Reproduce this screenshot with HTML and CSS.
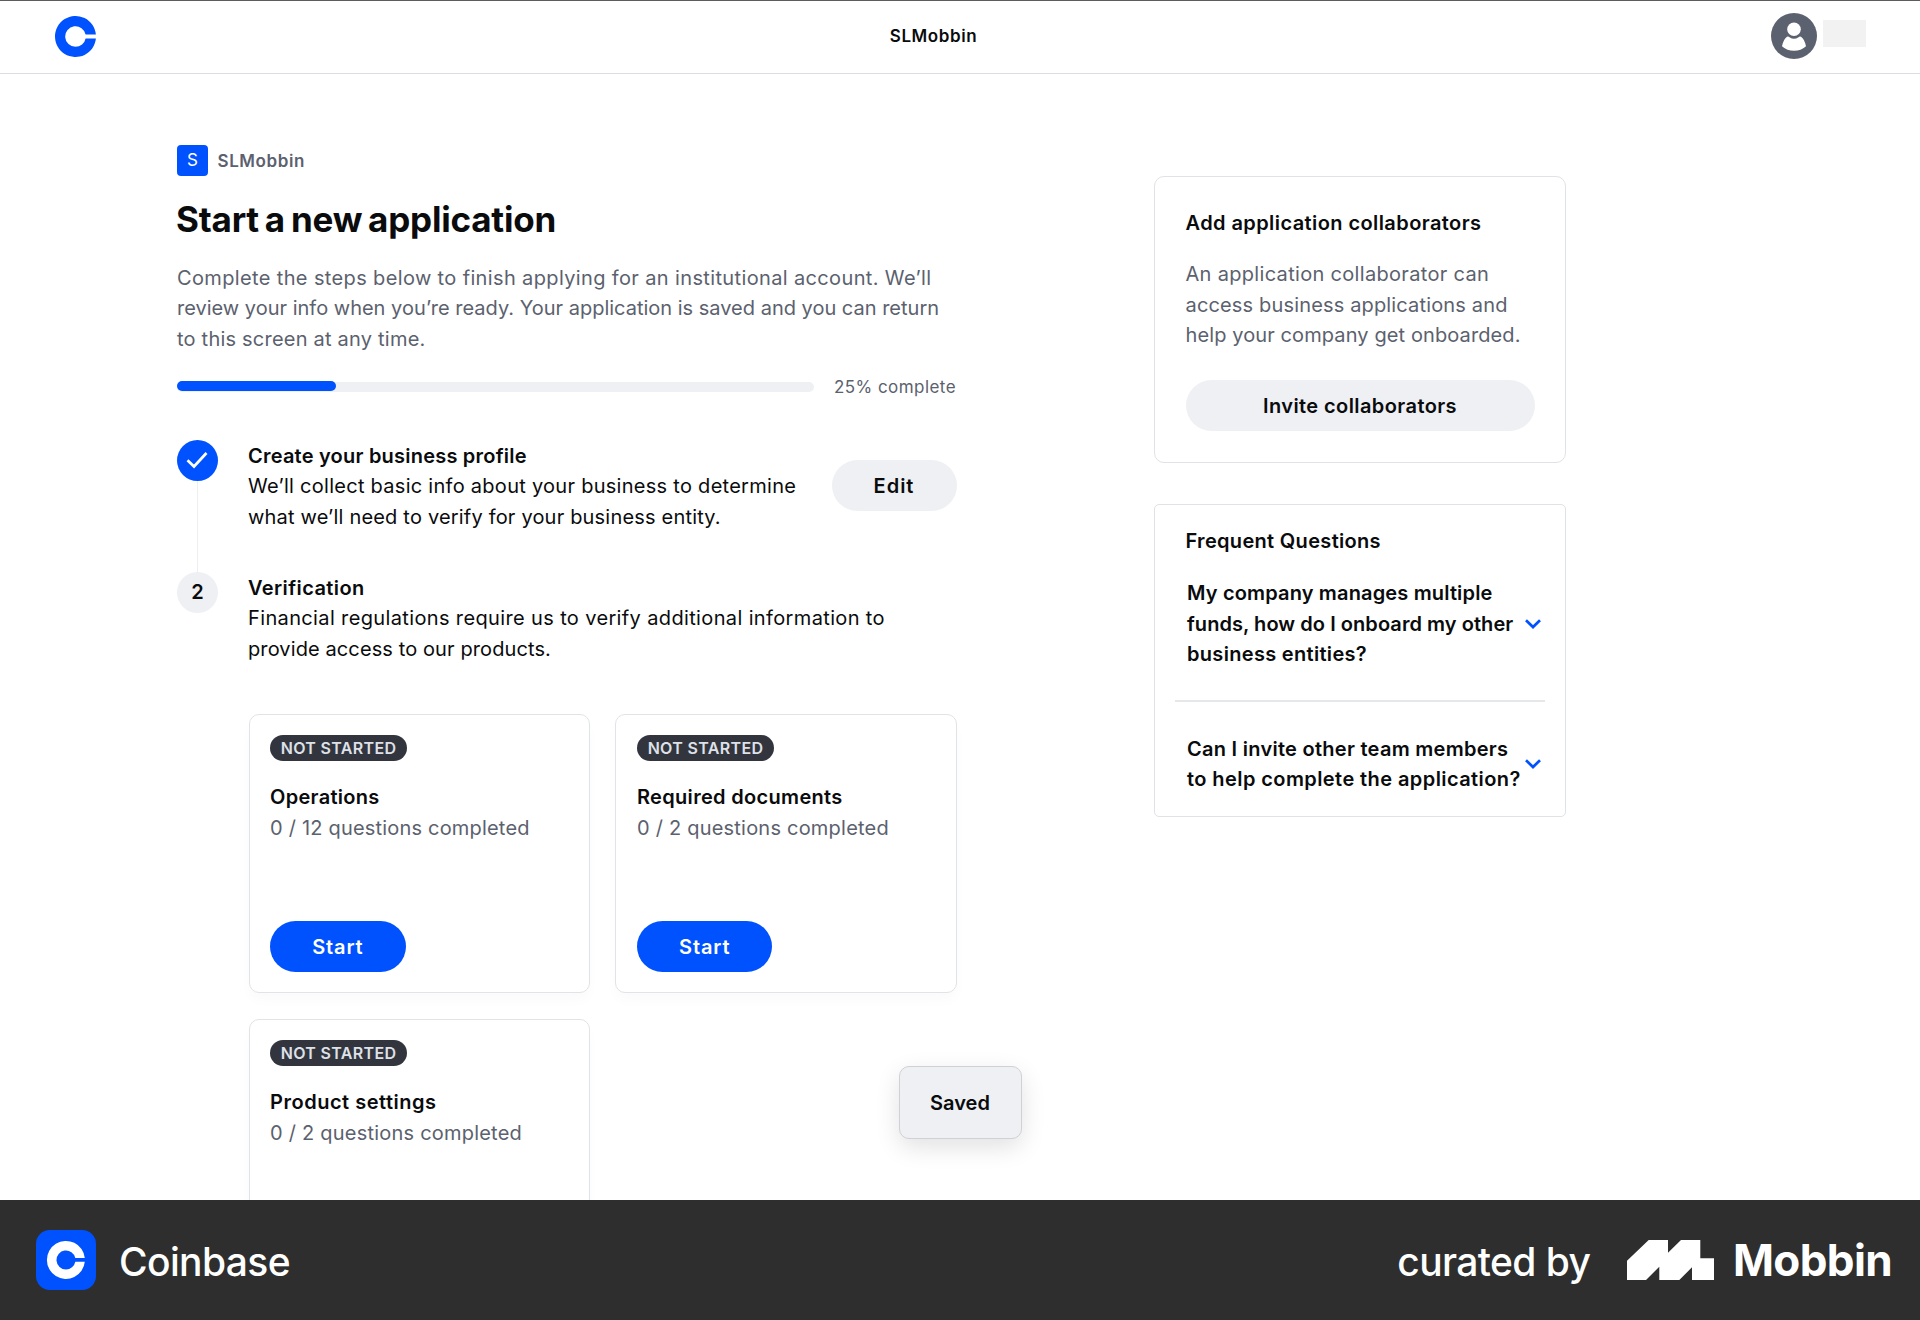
FILE: index.html
```html
<!DOCTYPE html>
<html lang="en">
<head>
<meta charset="utf-8">
<title>Start a new application</title>
<link rel="stylesheet" href="styles.css">
</head>
<body>
<div class="page">
  <header class="topbar">
    <svg class="topbar-logo" viewBox="0 0 41 41" aria-hidden="true"><path fill="#0052ff" d="M20.500 30.800A10.300 10.300 0 1 1 30.600 18.500H40.900A20.500 20.500 0 1 0 40.900 22.500H30.600A10.300 10.300 0 0 1 20.500 30.800Z"/></svg>
    <span class="topbar-name">SLMobbin</span>
    <div class="topbar-user">
      <svg class="avatar" viewBox="0 0 46 46" aria-hidden="true"><circle cx="23" cy="23" r="23" fill="#5b616e"/><circle cx="23" cy="16.300" r="6.800" fill="#fff"/><path fill="#fff" d="M16 23.700Q17.500 23.200 18.500 24.200Q23 27.400 27.500 24.200Q28.500 23.200 30 23.700Q33.500 26 35 33.200Q30 37.800 23 37.800T11 33.200Q12.500 26 16 23.700Z"/></svg>
      <span class="user-placeholder"></span>
    </div>
  </header>

  <main class="content">
    <section class="application">
      <div class="org">
        <span class="org-badge">S</span>
        <span class="org-name">SLMobbin</span>
      </div>
      <h1 class="title">Start a new application</h1>
      <p class="text muted intro"><span class="track-36">Complete the steps below to finish applying for an institutional account. We’ll</span><br><span>review your info when you’re ready. Your application is saved and you can return</span><br><span class="track-22">to this screen at any time.</span></p>
      <div class="progress">
        <div class="progress-track"><div class="progress-fill" style="width:25%"></div></div>
        <span class="progress-label">25% complete</span>
      </div>

      <ol class="steps">
        <li class="step">
          <div class="step-rail">
            <span class="step-mark done"><svg viewBox="0 0 41 41" aria-hidden="true"><path d="M10.500 20.300L17 26.500L29.500 13" fill="none" stroke="#fff" stroke-width="2.700"/></svg></span>
            <span class="step-line"></span>
          </div>
          <div class="step-body">
            <h2 class="heading track-22">Create your business profile</h2>
            <p class="text"><span class="track-28">We’ll collect basic info about your business to determine</span><br><span class="track-19">what we’ll need to verify for your business entity.</span></p>
          </div>
          <button class="btn btn-edit">Edit</button>
        </li>
        <li class="step">
          <div class="step-rail"><span class="step-mark">2</span></div>
          <div class="step-body">
            <h2 class="heading track-42">Verification</h2>
            <p class="text"><span class="track-36">Financial regulations require us to verify additional information to</span><br><span class="track-11">provide access to our products.</span></p>
          </div>
        </li>
      </ol>

      <div class="tasks">
        <article class="task">
          <span class="tag">NOT STARTED</span>
          <h3 class="heading track-28">Operations</h3>
          <p class="text muted track-19">0 / 12 questions completed</p>
          <button class="btn btn-primary">Start</button>
        </article>
        <article class="task">
          <span class="tag">NOT STARTED</span>
          <h3 class="heading track-31">Required documents</h3>
          <p class="text muted track-22">0 / 2 questions completed</p>
          <button class="btn btn-primary">Start</button>
        </article>
        <article class="task">
          <span class="tag">NOT STARTED</span>
          <h3 class="heading track-51">Product settings</h3>
          <p class="text muted track-22">0 / 2 questions completed</p>
        </article>
      </div>
    </section>

    <aside class="sidebar">
      <section class="panel collaborators">
        <h2 class="heading track-42">Add application collaborators</h2>
        <p class="text muted"><span class="track-31">An application collaborator can</span><br><span class="track-16">access business applications and</span><br><span class="track-11">help your company get onboarded.</span></p>
        <button class="btn btn-wide">Invite collaborators</button>
      </section>
      <section class="panel faq">
        <h2 class="heading track-31">Frequent Questions</h2>
        <div class="question">
          <span class="heading"><span class="track-16">My company manages multiple</span><br><span class="track-05">funds, how do I onboard my other</span><br><span class="track-31">business entities?</span></span>
          <svg class="chevron" viewBox="0 0 16 10" aria-hidden="true"><path d="M1 1.200L8 8L15 1.200" fill="none" stroke="#0052ff" stroke-width="2.700"/></svg>
        </div>
        <div class="question">
          <span class="heading"><span class="track-28">Can I invite other team members</span><br><span class="track-42">to help complete the application?</span></span>
          <svg class="chevron" viewBox="0 0 16 10" aria-hidden="true"><path d="M1 1.200L8 8L15 1.200" fill="none" stroke="#0052ff" stroke-width="2.700"/></svg>
        </div>
      </section>
    </aside>
  </main>
  <div class="toast">Saved</div>
</div>

<footer class="credit">
  <svg class="credit-app" viewBox="0 0 60 60" aria-hidden="true"><rect width="60" height="60" rx="14" fill="#0052ff"/><path fill="#fff" d="M30 39.500A9.500 9.500 0 1 1 39.300 28H48.800A19 19 0 1 0 48.800 31.800H39.300A9.500 9.500 0 0 1 30 39.500Z"/></svg>
  <span class="credit-name">Coinbase</span>
  <span class="credit-by">curated by</span>
  <svg class="credit-mark" viewBox="0 0 87 40" aria-hidden="true"><path fill="#fff" d="M0 20.700L21.700 0H41V12.700L54 0H73.300V18.300H87V40H65V27.300L52.300 40H32.300V26.700L19 40H0Z"/></svg>
  <span class="credit-brand">Mobbin</span>
</footer>
</body>
</html>
```
FILE: styles.css
```css
* { box-sizing: border-box; margin: 0; padding: 0; }

body {
  width: 1920px;
  height: 1320px;
  overflow: hidden;
  background: #fff;
  color: #0a0b0d;
  font-family: Inter, "Liberation Sans", sans-serif;
  font-size: 20px;
  line-height: 30.5px;
}

.page {
  position: relative;
  height: 1200px;
  overflow: hidden;
  border-top: 1px solid #5c5c5f;
}

.topbar {
  display: flex;
  align-items: center;
  justify-content: space-between;
  height: 73px;
  padding: 0 54px 2px 55px;
  border-bottom: 1px solid #dcdde0;
}
.topbar-logo { width: 41px; height: 41px; }
.topbar-name { font-size: 17px; line-height: 24px; font-weight: 600; letter-spacing: .59px; }
.topbar-user { display: flex; gap: 6px; }
.avatar { width: 46px; height: 46px; }
.user-placeholder { width: 43px; height: 27px; margin-top: 7px; background: #f2f2f2; }

.content { display: flex; justify-content: space-between; width: 1566px; padding-left: 177px; }
.application { width: 779.5px; padding-top: 71px; }

.org { display: flex; align-items: center; gap: 9.500px; height: 31px; font-size: 17px; line-height: 24px; }
.org-badge { width: 31px; height: 31px; border-radius: 4px; background: #0052ff; color: #fff; text-align: center; line-height: 31px; }
.org-name { color: #5b616e; font-weight: 600; letter-spacing: .59px; }

.title { margin: 21px 0 0 -1px; font-size: 35px; line-height: 44px; font-weight: 700; letter-spacing: -.2px; word-spacing: -2.200px; }
.text { font-size: 20px; line-height: 30.5px; white-space: nowrap; }
.muted { color: #5b616e; }
.heading { font-size: 20px; line-height: 30.5px; font-weight: 600; white-space: nowrap; }
.intro { margin-top: 21.600px; }

/* tracking steps, in hundredths of a pixel */
.track-05 { letter-spacing: .056px; }
.track-11 { letter-spacing: .105px; }
.track-16 { letter-spacing: .155px; }
.track-19 { letter-spacing: .19px; }
.track-22 { letter-spacing: .217px; }
.track-28 { letter-spacing: .275px; }
.track-31 { letter-spacing: .315px; }
.track-36 { letter-spacing: .363px; }
.track-42 { letter-spacing: .415px; }
.track-51 { letter-spacing: .51px; }

.progress { display: flex; align-items: center; height: 24px; margin-top: 20.500px; }
.progress-track { width: 637px; height: 10px; border-radius: 5px; background: #eef0f3; }
.progress-fill { height: 10px; margin-top: -1px; border-radius: 5px; background: #0052ff; }
.progress-label { margin-left: 20px; color: #5b616e; font-size: 17px; line-height: 24px; letter-spacing: .44px; white-space: nowrap; }

.steps { list-style: none; margin-top: 41px; }
.step { display: flex; height: 132px; }
.step-rail { display: flex; flex-direction: column; align-items: center; width: 41px; margin-right: 30px; }
.step-mark { flex: none; width: 41px; height: 41px; border-radius: 50%; background: #eef0f3; font-weight: 600; line-height: 41px; text-align: center; }
.step-mark.done { background: #0052ff; }
.step-mark svg { display: block; }
.step-line { flex: 1; width: 1.500px; background: #eceef1; }
.step-body { flex: 1; padding-top: 1px; }

.btn { height: 51px; padding-top: 1.500px; border: 0; border-radius: 26px; background: #eef0f3; color: #0a0b0d; font: 600 20px/30.5px Inter, "Liberation Sans", sans-serif; }
.btn-edit { width: 125px; margin-top: 20.500px; letter-spacing: 1px; }
.btn-primary { width: 135.5px; background: #0052ff; color: #fff; letter-spacing: .88px; }
.btn-wide { width: 100%; letter-spacing: .41px; }

.tasks { display: grid; grid-template-columns: 341.300px 341.300px; gap: 25.600px; margin: 10.500px 0 0 71.600px; }
.task { height: 279.400px; padding: 20.200px 20.500px; border: 1px solid #e2e3e6; border-radius: 10px; box-shadow: 0 8px 12px rgba(0, 0, 0, .02); }
.tag { display: block; width: 137px; height: 26px; border-radius: 13px; background: #32353d; color: #dfe1e8; font-size: 16px; line-height: 26px; font-weight: 600; letter-spacing: .336px; text-align: center; white-space: nowrap; }
.task .heading { margin-top: 21.200px; }
.task .btn { display: block; margin-top: 77.300px; }

.sidebar { width: 412px; padding-top: 102px; }
.panel { border: 1px solid #e1e2e5; }
.collaborators { height: 286.500px; padding: 31px 30.500px; border-radius: 10px; }
.collaborators .text { margin-top: 20.500px; }
.collaborators .btn { margin-top: 29.500px; }
.faq { height: 313.500px; margin-top: 41px; padding: 21.500px 20px 0; border-radius: 5px; }
.faq > .heading { padding-left: 10.500px; }
.question { display: flex; align-items: center; justify-content: space-between; padding: 0 4px 0 12px; margin-top: 21.700px; }
.question + .question { margin-top: 30.300px; padding-top: 31.900px; border-top: 2px solid #e6e7e9; }
.chevron { flex: none; width: 16px; height: 10px; }

.toast {
  position: absolute;
  left: 898.500px;
  top: 1064.500px;
  width: 123px;
  height: 73.500px;
  border: 1px solid #cfd1d6;
  border-radius: 10px;
  background: #eef0f3;
  font-weight: 600;
  line-height: 73px;
  text-align: center;
  box-shadow: 0 8px 24px rgba(0, 0, 0, .12);
}

.credit { display: flex; align-items: center; height: 120px; padding: 0 28px 0 36px; background: #2e2e2e; color: #fff; white-space: nowrap; }
.credit-app { width: 60px; height: 60px; }
.credit-name, .credit-by { padding-top: 4px; font-size: 39px; line-height: 48px; font-weight: 500; letter-spacing: -.62px; }
.credit-name { margin-left: 23px; }
.credit-by { margin-left: auto; }
.credit-mark { width: 87px; height: 40px; margin-left: 37px; }
.credit-brand { margin-left: 18.800px; font-size: 44px; line-height: 54px; font-weight: 700; letter-spacing: -.63px; }
```
